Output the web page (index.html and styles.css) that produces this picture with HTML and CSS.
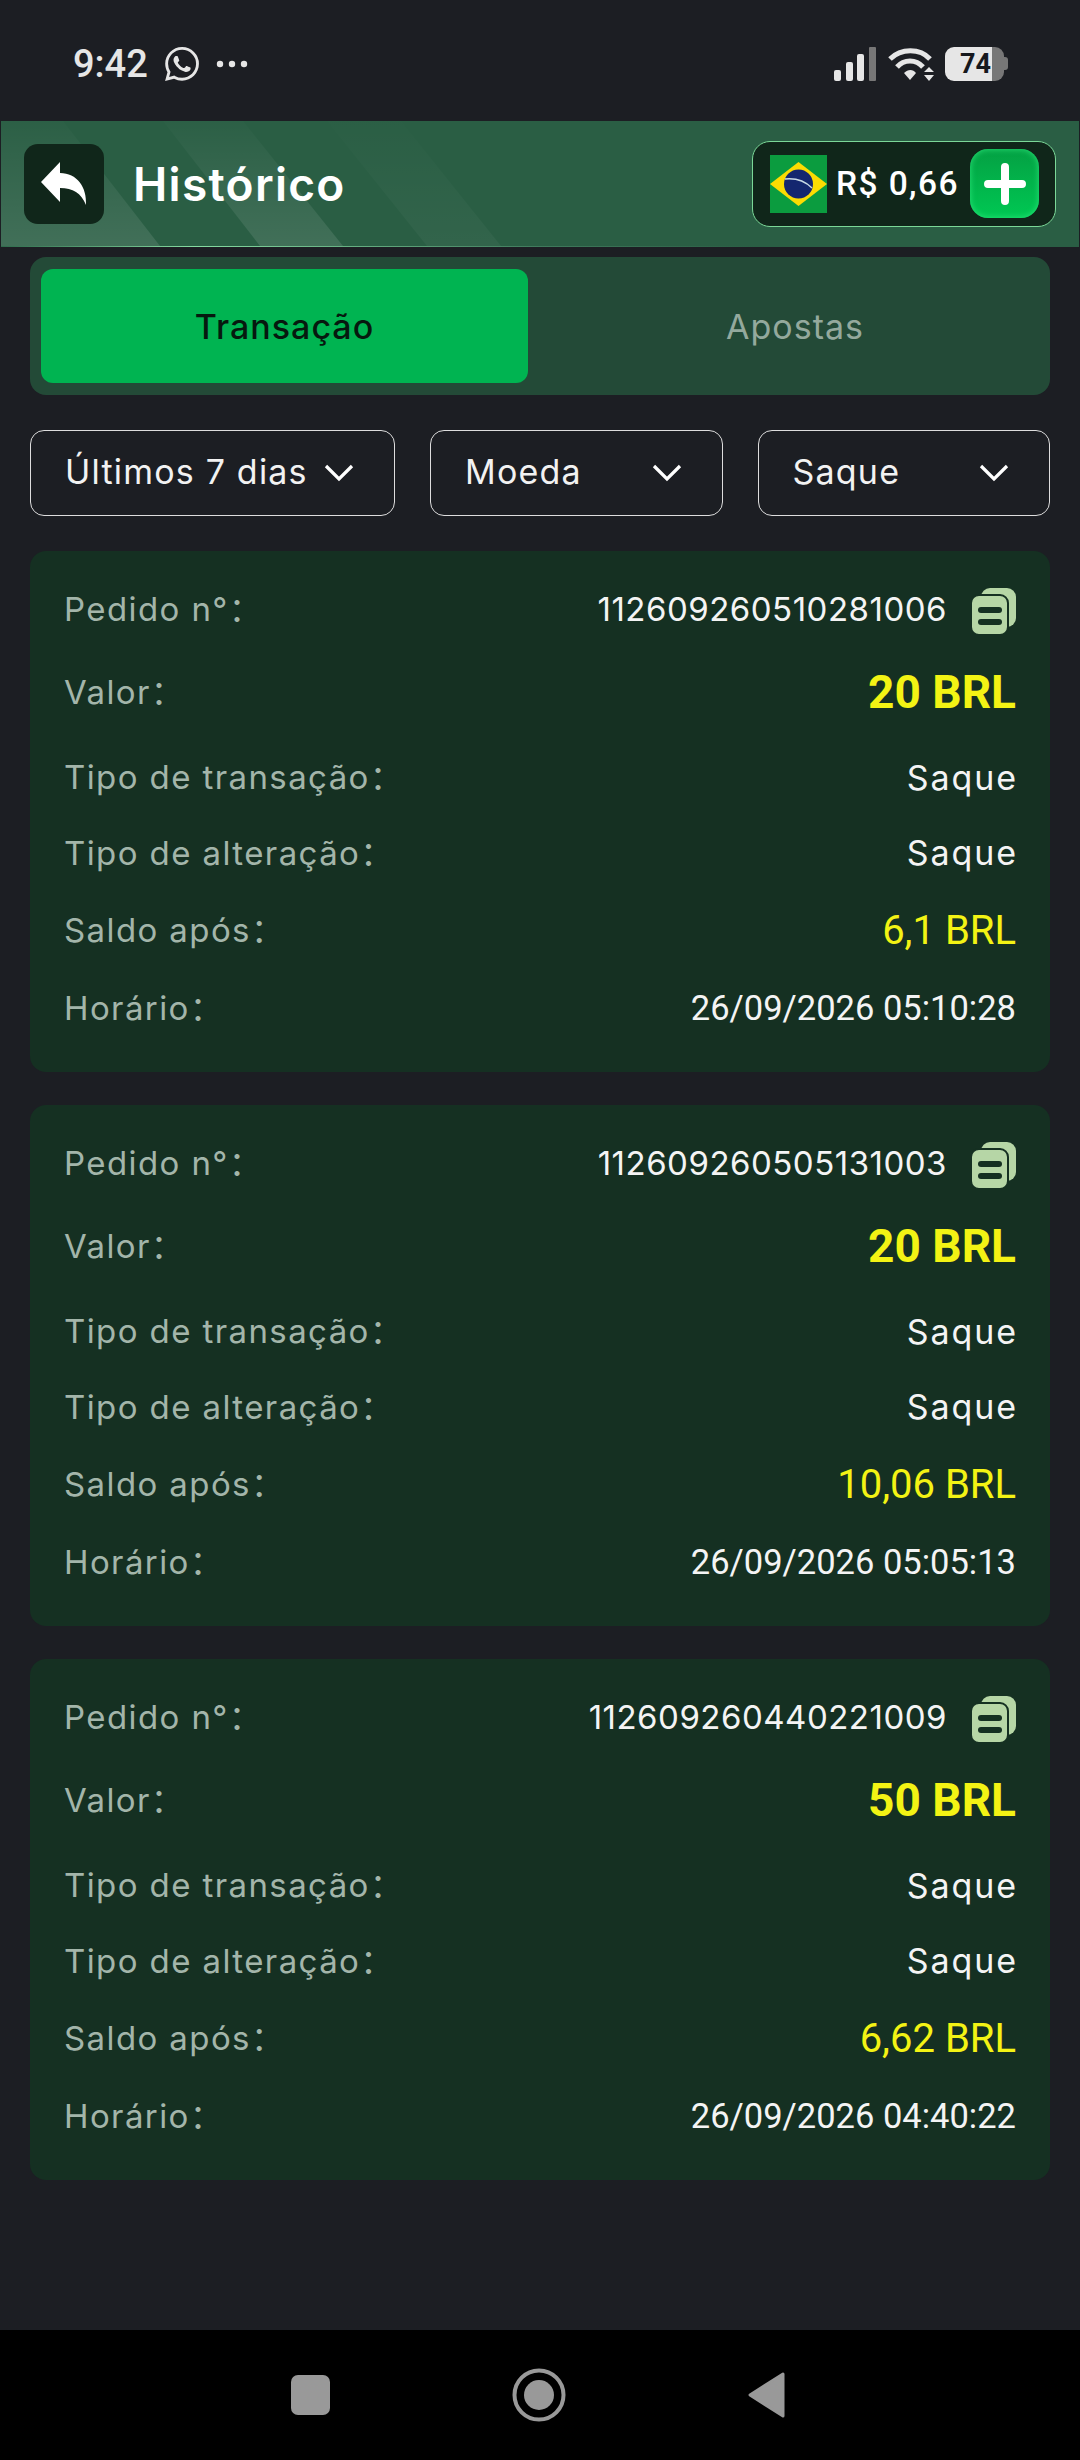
FILE: index.html
```html
<!DOCTYPE html>
<html lang="pt-BR">

<head>
    <meta charset="UTF-8">
    <title>Histórico</title>

    <!-- CSS -->
    <link rel="stylesheet" href="styles.css">

</head>

<body>
    <!-- Barra de status -->
    <div class="status">
        <div class="status-left">
            <span class="clock">9:42</span>
            <svg class="wa" viewBox="0 0 24 24"><path fill="#e6e6e6" d="M17.472 14.382c-.297-.149-1.758-.867-2.03-.967-.273-.099-.471-.148-.67.15-.197.297-.767.966-.94 1.164-.173.199-.347.223-.644.075-.297-.15-1.255-.463-2.39-1.475-.883-.788-1.48-1.761-1.653-2.059-.173-.297-.018-.458.13-.606.134-.133.298-.347.446-.52.149-.174.198-.298.298-.497.099-.198.05-.371-.025-.52-.075-.149-.669-1.612-.916-2.207-.242-.579-.487-.5-.669-.51-.173-.008-.371-.01-.57-.01-.198 0-.52.074-.792.372-.272.297-1.04 1.016-1.04 2.479 0 1.462 1.065 2.875 1.213 3.074.149.198 2.096 3.2 5.077 4.487.709.306 1.262.489 1.694.625.712.227 1.36.195 1.871.118.571-.085 1.758-.719 2.006-1.413.248-.694.248-1.289.173-1.413-.074-.124-.272-.198-.57-.347m-5.421 7.403h-.004a9.87 9.87 0 01-5.031-1.378l-.361-.214-3.741.982.998-3.648-.235-.374a9.86 9.86 0 01-1.51-5.26c.001-5.45 4.436-9.884 9.888-9.884 2.64 0 5.122 1.03 6.988 2.898a9.825 9.825 0 012.893 6.994c-.003 5.45-4.437 9.884-9.885 9.884m8.413-18.297A11.815 11.815 0 0012.05 0C5.495 0 .16 5.335.157 11.892c0 2.096.547 4.142 1.588 5.945L.057 24l6.305-1.654a11.882 11.882 0 005.683 1.448h.005c6.554 0 11.89-5.335 11.893-11.893a11.821 11.821 0 00-3.48-8.413Z"/></svg>
            <svg class="dots" viewBox="0 0 32 8"><circle cx="4" cy="4" r="3.2" fill="#e6e6e6"/><circle cx="16" cy="4" r="3.2" fill="#e6e6e6"/><circle cx="28" cy="4" r="3.2" fill="#e6e6e6"/></svg>
        </div>
        <div class="status-right">
            <svg class="signal" viewBox="0 0 42 34">
                <rect x="0" y="23" width="7" height="11" rx="2" fill="#e6e6e6"/>
                <rect x="12" y="15" width="7" height="19" rx="2" fill="#e6e6e6"/>
                <rect x="23" y="7" width="7" height="27" rx="2" fill="#e6e6e6"/>
                <rect x="35" y="0" width="7" height="34" rx="1" fill="#777"/>
            </svg>
            <svg class="wifi" viewBox="0 0 46 34">
                <path d="M2 12 C13 1 32 1 42 12" fill="none" stroke="#e6e6e6" stroke-width="5"/>
                <path d="M9 20 C16 12 28 12 35 20" fill="none" stroke="#e6e6e6" stroke-width="5"/>
                <path d="M16 26 C20 22 25 22 28 26 L22 33 Z" fill="#e6e6e6"/>
                <path d="M41 20 L46 25 H36 Z M36 28 H46 L41 34 Z" fill="#e6e6e6"/>
            </svg>
            <div class="battery"><div class="battery-fill">74</div><div class="battery-cap"></div></div>
        </div>
    </div>

    <!-- Topo -->
    <header class="topbar">
        <svg class="stripes" viewBox="0 0 1078 125" preserveAspectRatio="none">
            <defs>
                <linearGradient id="fade" x1="0" y1="0" x2="0" y2="1">
                    <stop offset="0" stop-color="#fff" stop-opacity="0.01"/>
                    <stop offset="1" stop-color="#fff" stop-opacity="0.11"/>
                </linearGradient>
            </defs>
            <polygon points="0,0 62,0 159,125 0,125" fill="url(#fade)"/>
            <polygon points="162,0 242,0 342,125 259,125" fill="url(#fade)"/>
            <polygon points="326,0 400,0 500,125 426,125" fill="url(#fade)" opacity="0.35"/>
        </svg>
        <div class="back">
            <svg viewBox="0 0 46 44" width="46" height="44"><path fill="#fff" d="M0 20 L19 0 V11 C36 11 46 25 45 43 C40 31 32 26 19 26 V40 Z"/></svg>
        </div>
        <h1 class="title">Histórico</h1>
        <div class="wallet">
            <svg class="flag" viewBox="0 0 57 58">
                <rect width="57" height="58" fill="#0b9c3f"/>
                <polygon points="28.5,7 57,29 28.5,51 0,29" fill="#fbdc02"/>
                <circle cx="28.5" cy="29" r="14.5" fill="#14276f"/>
                <path d="M15 24 C25 23 35 26 42 33" fill="none" stroke="#c9dbe6" stroke-width="1.6"/>
            </svg>
            <span class="balance">R$ 0,66</span>
            <div class="add">
                <svg viewBox="0 0 42 42" width="42" height="42"><path d="M21 4 V38 M4 21 H38" stroke="#fff" stroke-width="8" stroke-linecap="round"/></svg>
            </div>
        </div>
    </header>

    <main class="content">
        <div class="tabs">
            <div class="tab active">Transação</div>
            <div class="tab">Apostas</div>
        </div>

        <div class="filters">
            <div class="filter wide"><span>Últimos 7 dias</span><svg viewBox="0 0 30 18"><path d="M2 2 L15 15 L28 2" fill="none" stroke="#fff" stroke-width="3.2"/></svg></div>
            <div class="filter"><span>Moeda</span><svg viewBox="0 0 30 18"><path d="M2 2 L15 15 L28 2" fill="none" stroke="#fff" stroke-width="3.2"/></svg></div>
            <div class="filter"><span>Saque</span><svg viewBox="0 0 30 18"><path d="M2 2 L15 15 L28 2" fill="none" stroke="#fff" stroke-width="3.2"/></svg></div>
        </div>

        <!-- Pedido 1 -->
        <section class="card">
            <div class="row r-id"><span class="label">Pedido n°：</span><span class="order">112609260510281006<svg class="copy" viewBox="0 0 44 46"><use href="#copy-icon"/></svg></span></div>
            <div class="row r-val"><span class="label">Valor：</span><span class="amount">20 BRL</span></div>
            <div class="row r-type"><span class="label">Tipo de transação：</span><span class="text">Saque</span></div>
            <div class="row r-alt"><span class="label">Tipo de alteração：</span><span class="text">Saque</span></div>
            <div class="row r-bal"><span class="label">Saldo após：</span><span class="after">6,1 BRL</span></div>
            <div class="row r-time"><span class="label">Horário：</span><span class="time">26/09/2026 05:10:28</span></div>
        </section>

        <!-- Pedido 2 -->
        <section class="card">
            <div class="row r-id"><span class="label">Pedido n°：</span><span class="order">112609260505131003<svg class="copy" viewBox="0 0 44 46"><use href="#copy-icon"/></svg></span></div>
            <div class="row r-val"><span class="label">Valor：</span><span class="amount">20 BRL</span></div>
            <div class="row r-type"><span class="label">Tipo de transação：</span><span class="text">Saque</span></div>
            <div class="row r-alt"><span class="label">Tipo de alteração：</span><span class="text">Saque</span></div>
            <div class="row r-bal"><span class="label">Saldo após：</span><span class="after">10,06 BRL</span></div>
            <div class="row r-time"><span class="label">Horário：</span><span class="time">26/09/2026 05:05:13</span></div>
        </section>

        <!-- Pedido 3 -->
        <section class="card">
            <div class="row r-id"><span class="label">Pedido n°：</span><span class="order">112609260440221009<svg class="copy" viewBox="0 0 44 46"><use href="#copy-icon"/></svg></span></div>
            <div class="row r-val"><span class="label">Valor：</span><span class="amount">50 BRL</span></div>
            <div class="row r-type"><span class="label">Tipo de transação：</span><span class="text">Saque</span></div>
            <div class="row r-alt"><span class="label">Tipo de alteração：</span><span class="text">Saque</span></div>
            <div class="row r-bal"><span class="label">Saldo após：</span><span class="after">6,62 BRL</span></div>
            <div class="row r-time"><span class="label">Horário：</span><span class="time">26/09/2026 04:40:22</span></div>
        </section>
    </main>

    <!-- Barra de navegação -->
    <nav class="navbar">
        <svg class="nav-square" viewBox="0 0 39 40"><rect width="39" height="40" rx="7" fill="#999"/></svg>
        <svg class="nav-circle" viewBox="0 0 54 54"><circle cx="27" cy="27" r="24.5" fill="none" stroke="#999" stroke-width="4"/><circle cx="27" cy="27" r="15" fill="#999"/></svg>
        <svg class="nav-back" viewBox="0 0 37 46"><path d="M2 23 L35 2 V44 Z" fill="#999" stroke="#999" stroke-width="3" stroke-linejoin="round"/></svg>
    </nav>

    <svg class="defs" width="0" height="0">
        <symbol id="copy-icon" viewBox="0 0 44 46">
            <rect x="9" y="0" width="35" height="39" rx="9" fill="#b6d6a6"/>
            <rect x="-1" y="7" width="37" height="40" rx="8" fill="#b6d6a6" stroke="#153022" stroke-width="2"/>
            <rect x="6" y="19" width="24" height="6" rx="3" fill="#153022"/>
            <rect x="6" y="31" width="24" height="6" rx="3" fill="#153022"/>
        </symbol>
    </svg>
</body>

</html>
```

FILE: styles.css
```css
* {
    box-sizing: border-box;
}

body {
    display: flex;
    flex-direction: column;
    width: 1080px;
    height: 2460px;
    margin: 0;
    overflow: hidden;
    font-family: 'Inter', 'Noto Sans CJK SC', sans-serif;
    background-color: #1c1e23;
    color: #fff;
}

/* Status */
.status {
    display: flex;
    justify-content: space-between;
    align-items: center;
    height: 121px;
    padding: 6px 72px 0 73px;
    flex-shrink: 0;
}

.status-left,
.status-right {
    display: flex;
    align-items: center;
}

.clock {
    font-family: 'Roboto', sans-serif;
    font-size: 38px;
    font-weight: 500;
    color: #e6e6e6;
}

.wa {
    width: 34px;
    height: 34px;
    margin-left: 17px;
}

.dots {
    width: 32px;
    height: 8px;
    margin-left: 17px;
}

.signal {
    width: 42px;
    height: 34px;
}

.wifi {
    width: 46px;
    height: 34px;
    margin-left: 12px;
}

.battery {
    display: flex;
    align-items: center;
    margin-left: 11px;
}

.battery-fill {
    width: 59px;
    height: 34px;
    padding-left: 2px;
    border-radius: 9px;
    background: linear-gradient(90deg, #e6e6e6 80%, #777 80%);
    color: #16181c;
    font-family: 'Roboto', sans-serif;
    font-size: 27px;
    font-weight: 700;
    line-height: 34px;
    text-align: center;
}

.battery-cap {
    width: 4px;
    height: 13px;
    border-radius: 0 3px 3px 0;
    background-color: #777;
}

/* Topo */
.topbar {
    position: relative;
    display: flex;
    align-items: center;
    height: 126px;
    margin: 0 1px;
    padding: 0 23px;
    flex-shrink: 0;
    background-color: #2a5e44;
    border-bottom: 1px solid;
    border-image: linear-gradient(90deg, #2f6a4c, #86dca2 18%, #3f7a5c 50%, #2a5e44 70%) 1;
}

.stripes {
    position: absolute;
    left: 0;
    top: 0;
    width: 100%;
    height: 100%;
}

.back {
    position: relative;
    display: flex;
    align-items: center;
    justify-content: center;
    width: 80px;
    height: 80px;
    border-radius: 14px;
    background-color: #10261a;
}

.title {
    position: relative;
    flex: 1;
    margin: 0 0 0 29px;
    font-size: 46px;
    font-weight: 600;
    letter-spacing: 1.3px;
    color: #fff;
}

.wallet {
    position: relative;
    display: flex;
    align-items: center;
    width: 304px;
    height: 86px;
    padding: 0 16px 0 17px;
    border: 1.5px solid #7bd898;
    border-radius: 18px;
    background-color: #10261a;
}

.flag {
    width: 57px;
    height: 58px;
}

.balance {
    flex: 1;
    margin-left: 9px;
    font-family: 'Roboto', sans-serif;
    font-size: 33.5px;
    font-weight: 500;
    letter-spacing: 1.4px;
    white-space: nowrap;
}

.add {
    display: flex;
    align-items: center;
    justify-content: center;
    width: 69px;
    height: 69px;
    border-radius: 18px;
    background: linear-gradient(180deg, #04a043, #00c853);
    box-shadow: inset 0 0 6px #2ae57a;
}

/* Conteudo */
.content {
    flex: 1;
    padding: 10px 30px 0;
}

.tabs {
    display: flex;
    height: 138px;
    padding: 12px 12px 12px 11px;
    border-radius: 16px;
    background-color: #234a37;
}

.tab {
    display: flex;
    align-items: center;
    justify-content: center;
    flex: 1;
    padding-left: 24px;
    font-size: 34px;
    letter-spacing: 1px;
    color: #94a99d;
}

.tab.active {
    flex: none;
    width: 487px;
    padding-left: 0;
    border-radius: 12px;
    background-color: #00b451;
    color: #06190f;
    font-weight: 500;
}

.filters {
    display: flex;
    gap: 35px;
    margin: 35px 0;
}

.filter {
    display: flex;
    align-items: center;
    justify-content: space-between;
    flex: 1;
    height: 86px;
    padding: 0 40px 3px 34px;
    border: 1.5px solid #ddd;
    border-radius: 14px;
    font-size: 34px;
    letter-spacing: 1.2px;
    color: #f2f2f2;
}

.filter.wide {
    flex: none;
    width: 365px;
}

.filter svg {
    width: 30px;
    height: 18px;
    margin-top: 3px;
}

.card {
    height: 521px;
    margin-bottom: 33px;
    padding: 21px 34px 24px;
    border-radius: 16px;
    background-color: #153022;
}

.row {
    display: flex;
    justify-content: space-between;
    align-items: center;
}

.r-id { height: 74px; }
.r-val { height: 92px; }
.r-type { height: 78px; }
.r-alt { height: 73px; }
.r-bal { height: 82px; }
.r-time { height: 74px; }

.label {
    margin-bottom: 4px;
    font-size: 33px;
    letter-spacing: 1.4px;
    color: #a3b5aa;
}

.order {
    display: flex;
    align-items: center;
    font-size: 33px;
    letter-spacing: 0.5px;
    color: #f4f4f4;
}

.copy {
    width: 44px;
    height: 46px;
    margin: 3px 0 0 25px;
}

.amount {
    font-family: 'Roboto', sans-serif;
    font-size: 46px;
    font-weight: 700;
    color: #f3f314;
}

.text {
    margin-right: -2px;
    font-size: 34px;
    letter-spacing: 1.9px;
    color: #f4f4f4;
}

.after {
    font-family: 'Roboto', sans-serif;
    font-size: 40px;
    color: #f3f314;
}

.time {
    font-family: 'Roboto', sans-serif;
    font-size: 34.5px;
    color: #f4f4f4;
}

/* Navegacao */
.navbar {
    position: relative;
    height: 130px;
    flex-shrink: 0;
    background-color: #000;
    display: flex;
    align-items: center;
}

.nav-square {
    width: 39px;
    height: 40px;
    margin-left: 291px;
}

.nav-circle {
    width: 54px;
    height: 54px;
    margin-left: 182px;
}

.nav-back {
    width: 37px;
    height: 46px;
    margin-left: 182px;
}

.defs {
    position: absolute;
}
```
